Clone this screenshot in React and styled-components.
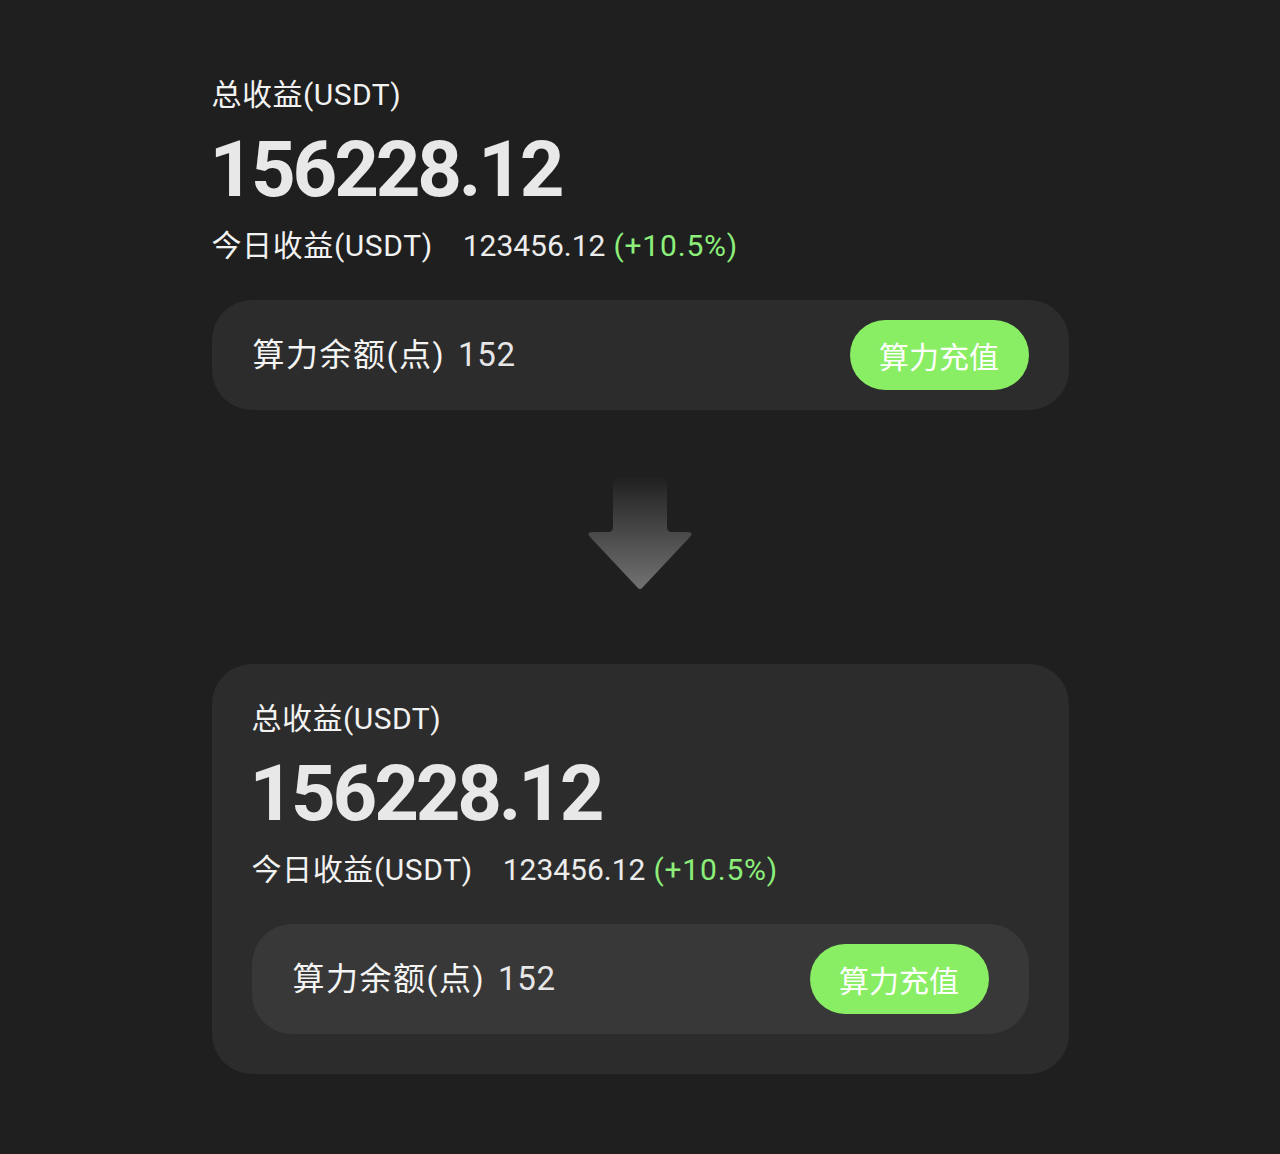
import React from "react";
import styled, { createGlobalStyle } from "styled-components";

const GlobalStyle = createGlobalStyle`
  html, body {
    margin: 0;
    padding: 0;
    background: #1f1f1f;
  }
  body {
    font-family: Roboto, "Noto Sans CJK SC", sans-serif;
    color: #f2f2f2;
  }
`;

const Page = styled.div`
  width: 1280px;
  min-height: 1154px;
  box-sizing: border-box;
  padding-top: 80px;
  display: flex;
  flex-direction: column;
  align-items: center;
`;

const Block = styled.section`
  width: 857px;
  box-sizing: border-box;
  padding: ${(p) => (p.$card ? "40px" : "0")};
  background: ${(p) => (p.$card ? "#2c2c2c" : "transparent")};
  border-radius: 40px;
  display: flex;
  flex-direction: column;
`;

const Label = styled.div`
  font-size: 30px;
  line-height: 30px;
  letter-spacing: 0.5px;
  color: #f2f2f2;
`;

const Total = styled.div`
  margin-top: 21px;
  margin-left: -2px;
  font-family: Roboto, sans-serif;
  font-weight: 700;
  font-size: 78px;
  line-height: 78px;
  letter-spacing: -3.2px;
  color: #e8e8e8;
`;

const SubLine = styled.div`
  margin-top: 22px;
  display: flex;
  align-items: baseline;
  font-size: 30px;
  line-height: 30px;
  color: #f2f2f2;
`;

const TodayLabel = styled.span`
  letter-spacing: 0.6px;
`;

const TodayValue = styled.span`
  margin-left: 30px;
  color: #ececec;
`;

const Change = styled.span`
  margin-left: 8px;
  letter-spacing: 0.8px;
  color: #8cef7a;
`;

const BalanceRow = styled.div`
  margin-top: 39px;
  height: 110px;
  box-sizing: border-box;
  padding: 0 40px 0 41px;
  border-radius: 40px;
  background: ${(p) => (p.$inner ? "#383838" : "#2c2c2c")};
  display: flex;
  align-items: center;
  justify-content: space-between;
`;

const BalanceText = styled.div`
  font-size: 32px;
  line-height: 32px;
  letter-spacing: 1.5px;
  color: #f4f4f4;
  display: flex;
  align-items: baseline;
`;

const BalanceNum = styled.span`
  margin-left: 13px;
  font-size: 33px;
  color: #e6e6e6;
  letter-spacing: 0.6px;
`;

const RechargeButton = styled.button`
  width: 179px;
  height: 70px;
  border: none;
  border-radius: 35px;
  background: #8aee64;
  color: #ffffff;
  font-family: "Noto Sans CJK SC", sans-serif;
  font-size: 30px;
  line-height: 30px;
  padding: 0;
  cursor: pointer;
`;

const ArrowWrap = styled.div`
  margin: 67px 0 72px;
  width: 108px;
  height: 115px;
  display: flex;
  justify-content: center;
`;

const DownArrow = () => (
  <svg width="108" height="115" viewBox="-1 0 108 115">
    <defs>
      <linearGradient id="arrowGrad" x1="0" y1="0" x2="0" y2="1">
        <stop offset="0" stopColor="#202020" />
        <stop offset="1" stopColor="#727272" />
      </linearGradient>
    </defs>
    <path
      d="M26 0 H80 V50 Q80 55 85 55 H100 Q108 55 102 61 L56 110 Q53 114 50 110 L4 61 Q-2 55 6 55 H21 Q26 55 26 50 Z"
      fill="url(#arrowGrad)"
    />
  </svg>
);

const Summary = ({ inner }) => (
  <>
    <Label>总收益(USDT)</Label>
    <Total>156228.12</Total>
    <SubLine>
      <TodayLabel>今日收益(USDT)</TodayLabel>
      <TodayValue>123456.12</TodayValue>
      <Change>(+10.5%)</Change>
    </SubLine>
    <BalanceRow $inner={inner}>
      <BalanceText>
        算力余额(点)<BalanceNum>152</BalanceNum>
      </BalanceText>
      <RechargeButton>算力充值</RechargeButton>
    </BalanceRow>
  </>
);

export default function App() {
  return (
    <>
      <GlobalStyle />
      <Page>
        <Block>
          <Summary />
        </Block>
        <ArrowWrap>
          <DownArrow />
        </ArrowWrap>
        <Block $card>
          <Summary inner />
        </Block>
      </Page>
    </>
  );
}
